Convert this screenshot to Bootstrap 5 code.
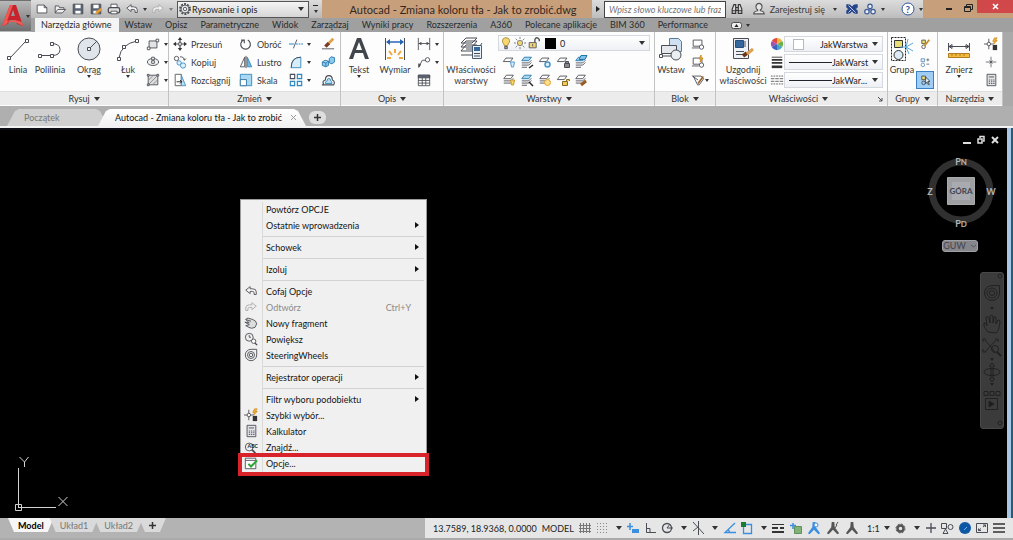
<!DOCTYPE html>
<html lang="pl">
<head>
<meta charset="utf-8">
<meta name="viewport" content="width=device-width, initial-scale=1">
<title>Autocad - Zmiana koloru tła - Jak to zrobić.dwg</title>
<link href="https://cdn.jsdelivr.net/npm/bootstrap@5.3.0/dist/css/bootstrap.min.css" rel="stylesheet">
<script src="https://cdn.jsdelivr.net/npm/bootstrap@5.3.0/dist/js/bootstrap.bundle.min.js"></script>
<style>
body{font-family:Lato,"Noto Sans",sans-serif;font-size:9px;line-height:11px;color:#222;background:#b0b0b0}
svg{display:block;flex:none;fill:none;stroke:#4a4d55;stroke-width:1}
.i14{width:14px;height:14px}.i16{width:16px;height:16px}
.shrinkable{min-width:0;min-height:0}
.btn{font-size:9px;line-height:11px;padding:0;border:0;border-radius:0;color:#3a3a3a;white-space:nowrap}
.caret{width:0;height:0;border:3px solid transparent;border-top:4px solid #333;border-bottom:0;flex:none}
.caret-sm{border-width:2px;border-top-width:3px;border-bottom:0}
/* title bar */
.app-logo{width:31px;height:32px;background:linear-gradient(#b9b9b9,#6f6f6f);border:1px solid #333}
.title-row{height:18px;background:#c79f7b}
.quick{width:291px;background:linear-gradient(#dcdcdc,#b9b9b9)}
.workspace{width:132px;height:17px;border:1px solid #555;background:linear-gradient(#f4f4f4,#d6d6d6)}
.workspace select,.combo select{appearance:none;border:0;background:none;font-size:9px;color:#222;padding:0;outline:0;min-width:0}
.tick{width:5px}
.doc-title{font-size:11px;color:#33281f;padding-left:12px}
.search-part{width:331px;background:linear-gradient(#dcdcdc,#bdbdbd)}
.search-part input{width:133px;height:17px;font-size:9px;font-style:italic;border:1px solid #444;padding:0 4px;border-radius:0}
.win-min{margin-left:22px;margin-right:11px}
.win-close{width:36px;height:13px;background:#d0484a}
/* ribbon tabs */
.ribbon-tabs{height:14px;background:#a0a0a0}
.ribbon-tabs a{color:#2b2b2b;text-decoration:none;line-height:14px;padding:0 7px 0 6px}
.ribbon-tabs a.active{background:#f4f4f4}
/* panels */
.ribbon{height:74px;background:#a9a9a9;padding-right:10px}
.panel{background:#fdfdfd;border-right:1px solid #c2c2c2;flex:1 1 0;min-width:0}
.panel-draw{flex-basis:169px}.panel-modify{flex-basis:172px}.panel-annot{flex-basis:103px}.panel-layers{flex-basis:211px}
.panel-block{flex-basis:61px}.panel-props{flex-basis:172px}.panel-groups{flex-basis:50px}.panel-tools{flex-basis:65px}
.panel-body{height:59px;padding-top:3px}
.panel-foot{height:14px;background:#ececec;border-top:1px solid #dedede;color:#333}
.stack-col>*{height:18px}
.tall{display:flex;flex-direction:column;align-items:center;height:54px}
.tall .pic{height:28px;margin-bottom:1px;display:flex;align-items:center}
.w28{width:28px}.w32{width:32px}.w36{width:36px}.w42{width:42px}.w50{width:50px}.w54{width:54px}.w66{width:66px}
.combo{height:16px;border:1px solid #d5d8de;background:linear-gradient(#fff,#eef0f4)}
.swatch{width:11px;height:11px}
.line-sample{width:43px}
.pressed{background:#9fcdf5!important;box-shadow:inset 0 0 0 1px #3b7fc4}
/* file tabs */
.file-tabs{height:22px;background:#afafaf;border-bottom:2px solid #f2f2f2;padding:3px 0 0 7px}
.file-tab{width:101px;height:17px;background:#d0d0d0;color:#777;clip-path:polygon(0 100%,8px 2px,12px 0,calc(100% - 12px) 0,calc(100% - 8px) 2px,100% 100%);padding:0 17px}
.file-tab.active{width:208px;background:linear-gradient(#fff,#f1f1f1);color:#111;margin-left:-10px}
.add-tab{background:#dedede;width:17px;height:13px;margin:2px 0 0 3px}
/* drawing area */
.canvas{background:#000;border-top:2px solid #0c0e14}
.edge{width:6px;background:linear-gradient(90deg,#a8c6e6 0 4px,#285a70 4px)}
.doc-win{right:7px;top:5px}
.doc-win svg{stroke:#ddd;stroke-width:2}
.compass{right:10px;top:20px}
.compass text{stroke:none;font-weight:700}
.ucs-pill{right:29px;top:110px;width:36px;height:12px;line-height:10px;background:#85858c;border:1px solid #a0a0a8!important;border-radius:3px;color:#44444a}
.nav-strip{right:3px;top:142px;width:24px;background:#3b3b3b;border:1px solid #484848;border-radius:3px}
.nav-strip svg{stroke:#212121}
.nav-strip .caret{border-top-color:#212121}
.axes{left:8px;bottom:1px;stroke:#d2d2d2}
.ctx{display:block;position:absolute;left:240px;top:69px;width:187px;min-width:0;padding:1px 0 3px;font-size:9px;background:#f0f0f0;border:1px solid #9b9b9b;border-radius:0}
.ctx::before{content:"";position:absolute;left:21px;top:2px;bottom:2px;border-left:1px solid #dadada}
.ctx .dropdown-item{display:flex;align-items:center;height:16px;padding:0 7px 0 3px;font-size:9px;line-height:15px;color:#141414}
.ctx .dropdown-item.disabled{color:#8b8b8b}
.ctx .slot{width:14px;margin-right:8px;flex:none}
.ctx .dropdown-divider{margin:3px 2px 2px 22px;border-color:#d2d2d2;opacity:1}
.right-tri{border:3px solid transparent;border-left:4px solid #111;border-right:0;margin-left:auto}
.framed{position:relative}
.framed::after{content:"";position:absolute;left:-3px;right:-3px;top:-2px;bottom:-5px;border:4px solid #d8232a}
/* status bar */
.status{height:22px;background:#b3b3b3;border-bottom:2px solid #aaa}
.sheet{height:14px;background:#dadada;color:#777;clip-path:polygon(0 0,100% 0,calc(100% - 6px) 100%,6px 100%);padding:0 10px;line-height:13px}
.sheet+.sheet{margin-left:-4px}
.sheet.active{background:#f6f6f6;color:#000;font-weight:700}
.tray{width:588px;background:#e6e6e6}
.gray-fill{fill:#555}.blue-fill{fill:#3b8ee0}
</style>
</head>
<body class="vh-100 d-flex flex-column overflow-hidden">
<svg class="d-none">
<defs>
<symbol id="new" viewBox="0 0 16 16"><path fill="#fff" d="M2.500 3.500h8l3 3v6h-11zM10.500 3.500v3h3"/></symbol>
<symbol id="open" viewBox="0 0 16 16"><path fill="#eee" d="M2.500 12.500v-8h4l1 2h5v2M2.500 12.500l3-4h9l-4 4z"/></symbol>
<symbol id="save" viewBox="0 0 16 16"><path fill="#596474" d="M2.500 2.500h11v11h-11z"/><path fill="#fff" stroke="none" d="M5 3h6v4H5zM5 10h6v3H5z"/></symbol>
<symbol id="saveas" viewBox="0 0 16 16"><path fill="#596474" d="M2.500 2.500h11v11h-11z"/><path fill="#fff" stroke="none" d="M5 3h6v4H5zM5 10h4v3H5z"/><path stroke="#e59a32" stroke-width="3" d="M8 13l6-5"/></symbol>
<symbol id="print" viewBox="0 0 16 16"><path fill="#fff" d="M4.500 7v-4.500h7V7"/><rect fill="#ddd" x="1.500" y="6.500" width="13" height="6" rx="2" stroke-width="1.500"/><path fill="#fff" d="M4.500 10.500h7v3h-7z"/></symbol>
<symbol id="undo" viewBox="0 0 16 16"><path fill="#f4f4f4" d="M2 7l5-4v2.500h3q4 0 4 3.500v3h-2.500v-2q0-1.500-2-1.500H7V11z"/></symbol>
<symbol id="redo" viewBox="0 0 16 16"><path fill="#eee" stroke="#aaa" d="M14 7L9 3v2.500H6Q2 5.500 2 9v3h2.500v-2q0-1.500 2-1.500H9V11z"/></symbol>
<symbol id="gear" viewBox="0 0 16 16"><circle cx="8" cy="8" r="5.500" stroke-width="2.500" stroke-dasharray="2.200 1.255"/><circle cx="8" cy="8" r="4.500" fill="#eee"/><circle cx="8" cy="8" r="2"/></symbol>
<symbol id="bino" viewBox="0 0 16 16"><g stroke="#333" stroke-width="1.300" fill="#ddd"><path d="M2.500 13v-5l2-5h2v10zM13.500 13v-5l-2-5h-2v10zM6.500 6.500h3v3h-3z"/><path d="M2.500 10h4M9.500 10h4"/></g></symbol>
<symbol id="user" viewBox="0 0 16 16"><path fill="#e6e6e6" stroke="#555" stroke-width="1.300" d="M2 13.500q0-3 4.500-3.500v-1q-2-1-2-4 .500-3.500 3.500-3.500t3.500 3.500q0 3-2 4v1q4.500 .500 4.500 3.500z"/></symbol>
<symbol id="exch" viewBox="0 0 16 16"><path fill="#24448c" stroke="#24448c" d="M2 3l4 .500L8 6l2-2.500L14 3v3l-2 2 2 2v3l-4-.500L8 10l-2 2.500L2 13v-3l2-2-2-2z"/><path stroke="#dce4f4" d="M4 4l8 8M4 12l3-3"/></symbol>
<symbol id="a360" viewBox="0 0 16 16"><g stroke="#3d5c98" stroke-width="1.400" fill="#e8edf6"><circle cx="8" cy="5" r="2.500"/><circle cx="4.500" cy="11" r="2.500"/><circle cx="11.500" cy="11" r="2.500"/><path d="M8 7v2.500"/></g></symbol>
<symbol id="move" viewBox="0 0 16 16"><path d="M8 3v10M3 8h10" stroke-width="1.400"/><path fill="#333" stroke="none" d="M8 0l2.500 3.500h-5zM8 16l2.500-3.500h-5zM0 8l3.500-2.500v5zM16 8l-3.500-2.500v5z"/><path fill="#fff" d="M6.500 6.500h3v3h-3z"/></symbol>
<symbol id="copy" viewBox="0 0 16 16"><circle cx="4" cy="4" r="2.500"/><path d="M8 2q5 0 5 4M12 4l1 2 2-2"/><g stroke="#3b8fc6" fill="#dff0fa"><circle cx="7" cy="9" r="2.500"/><circle cx="11.500" cy="12" r="3"/></g></symbol>
<symbol id="stretch" viewBox="0 0 16 16"><path fill="#fff" stroke="#555" d="M2.500 1.500h7v13h-7z"/><path fill="#b9ddf2" stroke="#3b8fc6" d="M9.500 2.500l5 12h-5z"/><path stroke="#222" d="M4 10h6M8 8l2 2-2 2"/></symbol>
<symbol id="rotate" viewBox="0 0 16 16"><path stroke-width="1.300" d="M10 3.500A5.500 5.500 0 1 1 5 3.500M2.500 3.500H6V7"/></symbol>
<symbol id="mirror" viewBox="0 0 16 16"><path d="M6.500 2.500v11h-5z"/><path stroke="#2f86bd" fill="#70b7de" d="M9.500 2.500v11h5z"/><path d="M8 1v14" stroke="#333"/></symbol>
<symbol id="scale" viewBox="0 0 16 16"><path fill="#a9d8f2" stroke="#2f86bd" d="M1.500 1.500h13v13h-13z"/><path fill="#fff" stroke="#2f6f99" d="M1.500 7.500h7v7h-7z"/></symbol>
<symbol id="trim" viewBox="0 0 16 16"><path d="M9 3L5 13"/><path stroke="#2f86bd" stroke-width="1.300" d="M0 8h6M8 8h2m1 0h2m1 0h2"/></symbol>
<symbol id="fillet" viewBox="0 0 16 16"><path fill="#d8edfa" stroke="#2f86bd" d="M13.500 2.500v12h-11q0-12 11-12z"/><path d="M2.500 14.500q0-12 11-12"/></symbol>
<symbol id="array" viewBox="0 0 16 16"><g stroke="#2f86bd" fill="#e6f4fc" stroke-width="1.300"><path d="M9.500 1.500h5v5h-5zM1.500 9.500h5v5h-5zM9.500 9.500h5v5h-5z"/></g><path fill="#fff" stroke-width="1.300" d="M1.500 1.500h5v5h-5z"/></symbol>
<symbol id="erase" viewBox="0 0 16 16"><path stroke="#e0a04a" stroke-width="3" d="M14 2L8 8"/><path stroke="#7a3c22" stroke-width="4" d="M9 7l-4 4"/><path d="M1 13.500h14"/></symbol>
<symbol id="explode" viewBox="0 0 16 16"><g fill="#8cc9ea" stroke="#2376ac"><path d="M1.500 8l3-2 4 1v5l-3 1.500-4-1.500zM9.500 4l2-2 4 1v5l-3 2-3-1zM1.500 8l4 1 3-2M5.500 9v4"/></g></symbol>
<symbol id="offset" viewBox="0 0 16 16"><path stroke-width="1.300" d="M1 13.500h14M3 13q-2-4 2-5 0-5 4-5t4 5q3 1 2 5"/><path fill="#b4dcf3" stroke="#2f86bd" d="M5 12q-1-2 2-3 0-3 2-3t2 3q2 1 1.500 3z"/></symbol>
<symbol id="rect" viewBox="0 0 16 16"><path fill="#e2e2e2" d="M3.500 4.500h9v8h-9z"/><path fill="#fff" d="M11.500 2.500h3v3h-3zM1.500 11.500h3v3h-3z"/></symbol>
<symbol id="ellipse" viewBox="0 0 16 16"><ellipse cx="8" cy="8" rx="6.500" ry="4" fill="#eee"/><path fill="#fff" d="M6.500 6.500h3v3h-3zM6.500 2.500h3v3h-3z"/></symbol>
<symbol id="hatch" viewBox="0 0 16 16"><path fill="#ddd" d="M2.500 2.500h11v11h-11z"/><path stroke="#888" d="M3 8l5-5M3 13L13 3M8 13l5-5"/><path fill="#fff" d="M1.500 1.500h2v2h-2zM12.500 1.500h2v2h-2zM1.500 12.500h2v2h-2z"/></symbol>
<symbol id="dimlin" viewBox="0 0 16 16"><path d="M1.500 1v14M14.500 1v14M2 7.500h12"/><path fill="#444" stroke="none" d="M2 7.500l3-2v4zM14 7.500l-3-2v4z"/></symbol>
<symbol id="leader" viewBox="0 0 16 16"><path d="M2 14l4-8h4"/><circle cx="12" cy="5.500" r="2.500"/><path fill="#444" d="M2 14v-4l2 1z"/></symbol>
<symbol id="table" viewBox="0 0 16 16"><path fill="#fff" d="M1.500 2.500h13v12h-13zM1.500 8.500h13M1.500 11.500h13M6 5v9M10 5v9"/><path fill="#596474" d="M1.500 2.500h13v3h-13z"/></symbol>
<symbol id="layer" viewBox="0 0 16 16"><path fill="#fff" d="M5 2.500h8l-3 4H2zM2 9h8l3-3M2 11.500h8l3-3"/></symbol>
<symbol id="flat" viewBox="0 0 16 16"><path fill="#fff" d="M4.500 3.500h8l-3 4h-8z"/></symbol>
<symbol id="bluelayer" viewBox="0 0 16 16"><path fill="#a9d8f2" stroke="#2376ac" d="M5 2.500h8l-3 4H2z"/><path d="M2 9h8l3-3M2 11.500h8l3-3M2 14h6"/></symbol>
<symbol id="bulb" viewBox="0 0 16 16"><path fill="#f6d871" stroke="#a48435" d="M6 11q0-2-2-4-.500-5 4-5t4 5q-2 2-2 4z"/><path fill="#aaa" d="M6.500 12h3v2.500h-3z"/></symbol>
<symbol id="sun" viewBox="0 0 16 16"><circle cx="8" cy="8" r="3" fill="#f4d471" stroke="#777"/><path stroke="#777" d="M8 1v2.500M8 12.500V15M1 8h2.500M12.500 8H15M3 3l2 2M11 11l2 2M13 3l-2 2M5 11l-2 2"/></symbol>
<symbol id="unlock" viewBox="0 0 16 16"><path stroke-width="1.500" d="M9 7V4q2-4 5 0v2"/><path fill="#f0d37b" stroke="#555" d="M2.500 7.500h8v6h-8zM6.500 9v3"/></symbol>
<symbol id="insblk" viewBox="0 0 16 16"><path fill="#fff" d="M2.500 3.500h10v7h-10zM1 12.500h8"/><circle cx="12" cy="11.500" r="2.500" fill="#fff"/></symbol>
<symbol id="attr" viewBox="0 0 16 16"><path fill="#fff" d="M2.500 3.500h9l3 3-5 7h-2z"/><path stroke="#9a642b" stroke-width="2" d="M8 12l6-8"/><path d="M1 3l7 5"/></symbol>
<symbol id="group" viewBox="0 0 16 16"><path fill="#ecdf78" stroke="#333" d="M2.500 2.500h5v5h-5z"/><circle cx="5" cy="12" r="2.500" stroke="#333"/></symbol>
<symbol id="qsel" viewBox="0 0 16 16"><path d="M5.500 2v12M0 8h11"/><circle cx="5.500" cy="8" r="2" fill="#fff"/><path fill="#eeb23b" stroke="#d59122" d="M12 1l-2 4h2l-1 3 4-4h-2l2-3z"/><path fill="#333" stroke="none" d="M10 9h5v6h-5z"/></symbol>
<symbol id="point" viewBox="0 0 16 16"><path d="M8 1v14M1 8h14"/><path fill="#555" d="M6 6l4 4M10 6l-4 4"/></symbol>
<symbol id="calc" viewBox="0 0 16 16"><path fill="#e2e4e8" d="M3.500 1.500h10v13h-10z"/><path d="M5.500 4.500h6M5.500 8h1.500M8 8h1.500M10.500 8H12M5.500 10h1.500M8 10h1.500M10.500 10H12M5.500 12h1.500M8 12h1.500M10.500 12H12"/></symbol>
<symbol id="wheel" viewBox="0 0 16 16"><path d="M8 1.500h6.500V8A6.500 6.500 0 1 1 8 1.500z"/><circle cx="8" cy="8" r="4"/><circle cx="8" cy="8" r="2"/></symbol>
<symbol id="pan" viewBox="0 0 16 16"><path fill="#ddd" d="M2 4q1-2 3-1.500L10 4q4 1 4.500 5l-2 4q-4 2-7 0L2 11l4-1-5-3 5 1-4-4 6 2"/></symbol>
<symbol id="zoom" viewBox="0 0 16 16"><circle cx="6" cy="6" r="4.500" fill="#eee"/><path d="M6 3.500V6h2"/><circle cx="11" cy="10.500" r="2.500" fill="#fff"/><path stroke-width="1.600" d="M12.500 12.500L15 15"/></symbol>
<symbol id="find" viewBox="0 0 16 16"><circle cx="6" cy="8" r="4.500"/><path stroke-width="2" d="M9 11l4 4"/><text x="4" y="9" font-size="6" font-weight="700" fill="#222" stroke="none">ABC</text></symbol>
<symbol id="opts" viewBox="0 0 16 16"><path fill="#fff" d="M1.500 2.500h12v12h-12zM1.500 5h12"/><path stroke="#31a436" stroke-width="2.400" d="M5 9l3 3 7-7"/></symbol>
<symbol id="man" viewBox="0 0 16 16"><path stroke="none" d="M6.500 1h3l.500 6 5 7-2 1-5-5-5 5-2-1 5-7z"/></symbol>
<symbol id="lineweight" viewBox="0 0 16 16"><path stroke="#333" d="M2 2.500h12"/><path stroke="#333" stroke-width="2" d="M2 5.500h12M2 9h12"/><path stroke="#333" stroke-width="3" d="M2 13.500h12"/></symbol>
<symbol id="linetype" viewBox="0 0 16 16"><path stroke="#555" d="M1 3.500h14M1 12.500h14" stroke-dasharray="2 1"/><path stroke="#555" d="M1 6.500h14M1 9.500h14" stroke-dasharray="4 1"/></symbol>
</defs>
</svg>

<header class="d-flex flex-shrink-0">
  <button class="btn app-logo d-flex align-items-center justify-content-between flex-shrink-0" aria-label="Menu aplikacji">
    <svg width="23" height="24" viewBox="0 0 23 24"><path stroke="none" fill="#c8232c" d="M1 22L9 1h6l7 21-6-2-1-4H9l-2 4zM10 12h4l-2-6z"/><path stroke="none" fill="#ee5a52" d="M1 22L9 1h3L6 17l2-1-2 4zM8 17q6-2 13 1l1 4-6-3q-5-2-9 0z"/></svg>
    <span class="caret caret-sm"></span>
  </button>
  <div class="flex-grow-1 d-flex flex-column shrinkable">
    <div class="title-row d-flex">
      <div class="quick d-flex align-items-center">
        <div class="d-flex align-items-center ps-1 flex-grow-1">
          <button class="btn me-1" aria-label="Nowy"><svg class="i14"><use href="#new"/></svg></button>
          <button class="btn me-1" aria-label="Otwórz"><svg class="i14"><use href="#open"/></svg></button>
          <button class="btn me-1" aria-label="Zapisz"><svg class="i14"><use href="#save"/></svg></button>
          <button class="btn me-1" aria-label="Zapisz jako"><svg class="i14"><use href="#saveas"/></svg></button>
          <button class="btn me-1" aria-label="Drukuj"><svg class="i14"><use href="#print"/></svg></button>
          <button class="btn d-flex align-items-center gap-1" aria-label="Cofaj"><svg class="i14"><use href="#undo"/></svg><span class="caret caret-sm"></span></button>
          <button class="btn d-flex align-items-center gap-1 ms-1" aria-label="Odtwórz"><svg class="i14"><use href="#redo"/></svg><span class="caret caret-sm opacity-50"></span></button>
        </div>
        <div class="workspace d-flex align-items-center pe-1">
          <svg class="i14"><use href="#gear"/></svg>
          <select class="flex-grow-1" aria-label="Obszar roboczy"><option>Rysowanie i opis</option></select>
          <span class="caret"></span>
        </div>
        <button class="btn px-1 d-flex flex-column align-items-center" aria-label="Dostosuj"><span class="tick border-top border-dark mb-1"></span><span class="caret caret-sm"></span></button>
      </div>
      <div class="doc-title flex-grow-1 d-flex align-items-center justify-content-center text-nowrap">Autocad - Zmiana koloru tła - Jak to zrobić.dwg</div>
      <div class="search-part d-flex align-items-center">
        <button class="btn px-1" aria-label="Rozwiń"><svg width="4" height="8"><path fill="#222" stroke="none" d="M0 1l4 3-4 3z"/></svg></button>
        <input type="text" placeholder="Wpisz słowo kluczowe lub frazę" aria-label="Szukaj">
        <button class="btn ms-1" aria-label="Wyszukaj"><svg class="i14"><use href="#bino"/></svg></button>
        <button class="btn d-flex align-items-center ms-2"><svg class="i14 me-1"><use href="#user"/></svg>Zarejestruj się<span class="caret caret-sm ms-2"></span></button>
        <button class="btn ms-2" aria-label="Exchange"><svg class="i14"><use href="#exch"/></svg></button>
        <button class="btn d-flex align-items-center ms-1" aria-label="A360"><svg class="i14"><use href="#a360"/></svg><span class="caret caret-sm ms-1"></span></button>
        <button class="btn d-flex align-items-center ms-3" aria-label="Pomoc"><svg class="i14" viewBox="0 0 14 14"><circle cx="7" cy="7" r="6" fill="#fff" stroke="#2f56a0"/><text x="4.500" y="10.500" font-size="10" font-weight="700" fill="#2f56a0" stroke="none">?</text></svg><span class="caret caret-sm ms-1"></span></button>
      </div>
      <div class="d-flex align-items-start">
        <button class="btn win-min py-1" aria-label="Minimalizuj"><svg width="8" height="8"><path stroke="#222" stroke-width="2" d="M1 5h6"/></svg></button>
        <button class="btn pe-1 py-1" aria-label="Przywróć"><svg width="9" height="8"><path stroke="#222" d="M.5 2.500h6v5h-6zM2.500 2V.5h6v5H7M0 3.500h6"/></svg></button>
        <button class="btn win-close d-flex align-items-center justify-content-center" aria-label="Zamknij"><svg width="7" height="7"><path stroke="#fff" stroke-width="1.500" d="M1 1l5 5M6 1L1 6"/></svg></button>
      </div>
    </div>
    <nav class="ribbon-tabs d-flex text-nowrap" aria-label="Wstążka">
      <a href="#" class="active ms-1">Narzędzia główne</a><a href="#">Wstaw</a><a href="#">Opisz</a><a href="#">Parametryczne</a><a href="#">Widok</a><a href="#">Zarządzaj</a><a href="#">Wyniki pracy</a><a href="#">Rozszerzenia</a><a href="#">A360</a><a href="#">Polecane aplikacje</a><a href="#">BIM 360</a><a href="#">Performance</a>
      <button class="btn d-flex align-items-center ms-3" aria-label="Zwiń"><svg width="11" height="7"><rect x=".5" y=".5" width="10" height="6" rx="2" fill="#eee"/><path fill="#222" stroke="none" d="M3.500 5l2-3 2 3z"/></svg><span class="caret caret-sm ms-1"></span></button>
    </nav>
  </div>
</header>

<main class="ribbon d-flex flex-shrink-0">
  <section class="panel panel-draw">
    <div class="panel-body d-flex">
      <button class="btn tall w36"><span class="pic"><svg width="24" height="25"><path d="M4 21L20 4"/><path fill="#fff" d="M1.500 19.500h3v3h-3zM19.500 2.500h3v3h-3z"/></svg></span>Linia</button>
      <button class="btn tall w28"><span class="pic"><svg width="24" height="24"><path d="M2 18.500h12q8 0 8-6t-9-6"/><path fill="#fff" d="M.5 17.500h3v3h-3zM12.500 17.500h3v3h-3zM12.500 5.500h3v3h-3z"/></svg></span>Polilinia</button>
      <button class="btn tall w42 ms-1 me-n1"><span class="pic"><svg width="24" height="26"><circle cx="12" cy="13" r="11" fill="#dfe5ea"/><path d="M12 13l8-8"/><path fill="#fff" d="M10.500 11.500h3v3h-3z"/></svg></span>Okrąg<span class="caret caret-sm"></span></button>
      <button class="btn tall w36"><span class="pic"><svg width="24" height="25"><path d="M3 21Q5 7 21 4"/><path fill="#fff" d="M1.500 20.500h3v3h-3zM19.500 2.500h3v3h-3zM6.500 8.500h3v3h-3z"/></svg></span>Łuk<span class="caret caret-sm"></span></button>
      <div class="stack-col">
        <button class="btn d-flex align-items-center gap-1" aria-label="Prostokąt"><svg class="i14"><use href="#rect"/></svg><span class="caret caret-sm"></span></button>
        <button class="btn d-flex align-items-center gap-1" aria-label="Elipsa"><svg class="i14"><use href="#ellipse"/></svg><span class="caret caret-sm"></span></button>
        <button class="btn d-flex align-items-center gap-1" aria-label="Kreskuj"><svg class="i14"><use href="#hatch"/></svg><span class="caret caret-sm"></span></button>
      </div>
    </div>
    <div class="panel-foot d-flex align-items-center justify-content-center gap-1">Rysuj<span class="caret"></span></div>
  </section>
  <section class="panel panel-modify">
    <div class="panel-body d-flex ps-1">
      <div class="stack-col w66">
        <button class="btn d-flex align-items-center gap-1"><svg class="i14"><use href="#move"/></svg>Przesuń</button>
        <button class="btn d-flex align-items-center gap-1"><svg class="i14"><use href="#copy"/></svg>Kopiuj</button>
        <button class="btn d-flex align-items-center gap-1"><svg class="i14"><use href="#stretch"/></svg>Rozciągnij</button>
      </div>
      <div class="stack-col w50">
        <button class="btn d-flex align-items-center gap-1"><svg class="i14"><use href="#rotate"/></svg>Obróć</button>
        <button class="btn d-flex align-items-center gap-1"><svg class="i14"><use href="#mirror"/></svg>Lustro</button>
        <button class="btn d-flex align-items-center gap-1"><svg class="i14"><use href="#scale"/></svg>Skala</button>
      </div>
      <div class="stack-col w32">
        <button class="btn d-flex align-items-center gap-1" aria-label="Utnij"><svg class="i14"><use href="#trim"/></svg><span class="caret caret-sm"></span></button>
        <button class="btn d-flex align-items-center gap-1" aria-label="Zaokrągl"><svg class="i14"><use href="#fillet"/></svg><span class="caret caret-sm"></span></button>
        <button class="btn d-flex align-items-center gap-1" aria-label="Szyk"><svg class="i14"><use href="#array"/></svg><span class="caret caret-sm"></span></button>
      </div>
      <div class="stack-col">
        <button class="btn d-flex align-items-center" aria-label="Wymaż"><svg class="i14"><use href="#erase"/></svg></button>
        <button class="btn d-flex align-items-center" aria-label="Rozbij"><svg class="i14"><use href="#explode"/></svg></button>
        <button class="btn d-flex align-items-center" aria-label="Odsuń"><svg class="i14"><use href="#offset"/></svg></button>
      </div>
    </div>
    <div class="panel-foot d-flex align-items-center justify-content-center gap-1">Zmień<span class="caret"></span></div>
  </section>
  <section class="panel panel-annot">
    <div class="panel-body d-flex">
      <button class="btn tall w36"><span class="pic"><svg width="22" height="26"><path stroke="none" fill="#41454c" d="M1 23L9 2h4l8 21h-4l-2-6H7l-2 6zM8 14h6l-3-8z"/></svg></span>Tekst<span class="caret caret-sm"></span></button>
      <button class="btn tall w36"><span class="pic"><svg width="22" height="26"><path d="M1.500 2v22M20.500 2v22"/><path stroke="#2864b4" stroke-width="1.500" d="M3 6h16"/><path fill="#2864b4" stroke="none" d="M2 6l4-3v6zM20 6l-4-3v6z"/><g stroke="#eda83c" stroke-width="2"><path d="M11 13v4M5 15l3 4M17 15l-3 4M3 22h4M15 22h4"/></g></svg></span>Wymiar</button>
      <div class="stack-col ps-1">
        <button class="btn d-flex align-items-center gap-1" aria-label="Liniowy"><svg class="i14"><use href="#dimlin"/></svg><span class="caret caret-sm"></span></button>
        <button class="btn d-flex align-items-center gap-1" aria-label="Odniesienie"><svg class="i14"><use href="#leader"/></svg><span class="caret caret-sm"></span></button>
        <button class="btn d-flex align-items-center" aria-label="Tabela"><svg class="i14"><use href="#table"/></svg></button>
      </div>
    </div>
    <div class="panel-foot d-flex align-items-center justify-content-center gap-1">Opis<span class="caret"></span></div>
  </section>
  <section class="panel panel-layers">
    <div class="panel-body d-flex">
      <button class="btn tall w54"><span class="pic"><svg width="26" height="26"><g fill="#fff"><path d="M8 13h12l4-6M3 19h12M8 9h11l-5 6H3zM8 5h11l-5 6H3zM8 2h11l-5 5H3z"/></g><path fill="#eaf2fa" stroke="#4a5a70" d="M14.500 9.500h9v13h-9z"/><path fill="#35679f" stroke="none" d="M16 11h6v4h-6z"/><path d="M16 17.500h6M16 20h6"/></svg></span>Właściwości<br>warstwy</button>
      <div class="flex-grow-1 pe-1">
        <div class="combo d-flex align-items-center mb-1">
          <svg class="i14"><use href="#bulb"/></svg><svg class="i14"><use href="#sun"/></svg><svg class="i14"><use href="#unlock"/></svg><span class="swatch bg-black ms-1 me-1"></span>
          <select class="flex-grow-1" aria-label="Warstwa"><option>0</option></select><span class="caret me-1"></span>
        </div>
        <div class="d-flex gap-1 mb-1 px-1">
          <svg class="i14"><use href="#flat"/><path stroke="#5a9cce" fill="#d4ecfa" d="M8.500 7h4l-1 5h-2z"/></svg>
          <svg class="i14"><use href="#bluelayer"/><path stroke="#222" stroke-width="1.500" d="M9 13l4-3"/></svg>
          <svg class="i14"><use href="#flat"/><circle cx="9.500" cy="9.500" r="2.500" fill="#dff2fc" stroke="#4b94c4" stroke-width="1.500"/></svg>
          <svg class="i14"><use href="#flat"/><path fill="#888" d="M8.500 8.500h5v4h-5zM9.500 8V6.500h3V8"/></svg>
          <svg class="i14"><use href="#bluelayer"/><path fill="#7fc1e6" stroke="#2376ac" d="M7 .5h6l-2 4H5z"/></svg>
        </div>
        <div class="d-flex gap-1 px-1">
          <svg class="i14"><use href="#layer"/><path stroke="#c89230" fill="#f8d86a" d="M8.500 7h4l-1 5h-2z"/></svg>
          <svg class="i14"><use href="#bluelayer"/><path stroke="#222" stroke-width="1.500" d="M9 9l4 4"/></svg>
          <svg class="i14"><use href="#layer"/><circle cx="9.500" cy="9.500" r="3" fill="#fae08a" stroke="#e0a232"/></svg>
          <svg class="i14"><use href="#flat"/><path fill="#f0c95a" stroke="#8a6a22" d="M6.500 8.500h5v4h-5zM10.500 8V6.500h3V8"/></svg>
          <svg class="i14"><use href="#layer"/><path stroke="#9a5b25" stroke-width="3" d="M7 12l5-4"/></svg>
        </div>
      </div>
    </div>
    <div class="panel-foot d-flex align-items-center justify-content-center gap-1">Warstwy<span class="caret"></span></div>
  </section>
  <section class="panel panel-block">
    <div class="panel-body d-flex">
      <button class="btn tall w32"><span class="pic"><svg width="25" height="26"><path fill="#cfe0f0" stroke="#5a7ca4" d="M10.500 2.500h9l3 3v10h-12z"/><path fill="#e4e8ec" d="M2.500 9.500h15v8h-15z"/><circle cx="17" cy="19" r="5" fill="#eceff2"/><path fill="#fff" d="M.5 18.500h3v3h-3zM3 20h9"/></svg></span>Wstaw</button>
      <div class="stack-col">
        <button class="btn d-flex align-items-center ms-1" aria-label="Utwórz"><svg class="i14"><use href="#insblk"/></svg></button>
        <button class="btn d-flex align-items-center ms-1" aria-label="Edytuj"><svg class="i14"><use href="#insblk"/><path fill="#f2b53c" stroke="#d08c20" d="M10 0L8 4h2l-1 3 3-4h-2z"/></svg></button>
        <button class="btn d-flex align-items-center ms-1" aria-label="Atrybuty"><svg class="i14"><use href="#attr"/></svg><span class="caret caret-sm"></span></button>
      </div>
    </div>
    <div class="panel-foot d-flex align-items-center justify-content-center gap-1">Blok<span class="caret"></span></div>
  </section>
  <section class="panel panel-props">
    <div class="panel-body d-flex">
      <button class="btn tall w54"><span class="pic"><svg width="24" height="26"><path fill="#eef2f6" d="M2.500 2.500h15v20h-15z"/><path fill="#35679f" stroke="#24507e" d="M4.500 4.500h8v7h-8z"/><path d="M5 15.500h8M5 18.500h8M14 5v6"/><path stroke="#6c3515" stroke-width="4" d="M12 20l4-3"/><path stroke="#e0a053" stroke-width="3" d="M16 18l6-5"/></svg></span>Uzgodnij<br>właściwości</button>
      <div class="stack-col flex-grow-1 shrinkable pe-1">
        <div class="d-flex align-items-center"><svg class="i14" viewBox="0 0 16 16"><g stroke="none"><path fill="#e24a3c" d="M8 8V1a7 7 0 0 0-6 3.500z"/><path fill="#a54fae" d="M8 8L2 4.500a7 7 0 0 0 0 7z"/><path fill="#3b62bd" d="M8 8l-6 3.500A7 7 0 0 0 8 15z"/><path fill="#45a7c4" d="M8 8v7a7 7 0 0 0 6-3.500z"/><path fill="#69b14b" d="M8 8l6 3.500a7 7 0 0 0 0-7z"/><path fill="#f0b33d" d="M8 8l6-3.500A7 7 0 0 0 8 1z"/></g></svg>
          <div class="combo flex-grow-1 shrinkable d-flex align-items-center"><span class="swatch bg-white border border-secondary border-opacity-50 ms-2 me-3"></span><select class="flex-grow-1" aria-label="Kolor"><option>JakWarstwa</option></select><span class="caret me-1"></span></div></div>
        <div class="d-flex align-items-center"><svg class="i14"><use href="#lineweight"/></svg>
          <div class="combo flex-grow-1 shrinkable d-flex align-items-center"><span class="line-sample border-top border-dark ms-1"></span><select class="flex-grow-1" aria-label="Grubość linii"><option>JakWarst</option></select><span class="caret me-1"></span></div></div>
        <div class="d-flex align-items-center"><svg class="i14"><use href="#linetype"/></svg>
          <div class="combo flex-grow-1 shrinkable d-flex align-items-center"><span class="line-sample border-top border-dark ms-1"></span><select class="flex-grow-1" aria-label="Rodzaj linii"><option>JakWar...</option></select><span class="caret me-1"></span></div></div>
      </div>
    </div>
    <div class="panel-foot d-flex align-items-center px-1"><span class="flex-grow-1 d-flex align-items-center justify-content-center gap-1">Właściwości<span class="caret"></span></span><svg width="6" height="6"><path d="M1 1l4 4M5 2v3H2"/></svg></div>
  </section>
  <section class="panel panel-groups">
    <div class="panel-body d-flex">
      <button class="btn tall w28"><span class="pic"><svg width="24" height="28"><path stroke="#222" stroke-dasharray="2 1" d="M1.500 2.500h14v23h-14z"/><path fill="#e8de76" stroke="#333" d="M4.500 5.500h8v7h-8z"/><circle cx="8.500" cy="20" r="4.500" fill="#dcebf6" stroke="#333"/><path stroke="#5aa9dc" d="M16 12l7-4M16 12l7 4M16 12l2-8M16 12l3 7M16 12h-6"/></svg></span>Grupa</button>
      <div class="stack-col">
        <button class="btn d-flex align-items-center px-1" aria-label="Edytuj grupę"><svg width="10" height="14" viewBox="0 0 14 16"><use href="#group" width="16" height="16"/><path stroke="#c88d2b" stroke-width="2.500" d="M6 11l7-9"/></svg></button>
        <button class="btn d-flex align-items-center px-1" aria-label="Rozgrupuj"><svg width="10" height="14" viewBox="0 0 14 16"><path stroke="#4a7eac" fill="#e6f1fa" d="M1.500 3.500h5v4h-5z"/><circle cx="4" cy="12" r="2.500" stroke="#4a7eac"/><path d="M9 5h4M11 3v4M9 11h4"/></svg></button>
        <button class="btn pressed d-flex align-items-center px-1" aria-label="Wybór grupy"><svg width="10" height="14" viewBox="0 0 14 16"><use href="#group" width="16" height="16"/><path fill="#fff" stroke="#222" d="M8 4v9l2-2 2 4 1-1-2-4h3z"/></svg></button>
      </div>
    </div>
    <div class="panel-foot d-flex align-items-center justify-content-center gap-1">Grupy<span class="caret"></span></div>
  </section>
  <section class="panel panel-tools">
    <div class="panel-body d-flex">
      <button class="btn tall w42 me-1"><span class="pic"><svg width="24" height="26"><path d="M1.500 7v8M22.500 7v8M2 10.500h20M2 10.500l3-2v4zM22 10.500l-3-2v4z"/><path fill="#f2bb3e" stroke="#b17c22" d="M1.500 17.500h21v4h-21zM5 18v2M9 18v2M13 18v2M17 18v2"/></svg></span>Zmierz<span class="caret caret-sm"></span></button>
      <div class="stack-col">
        <button class="btn d-flex align-items-center" aria-label="Szybki wybór"><svg class="i14"><use href="#qsel"/></svg></button>
        <button class="btn d-flex align-items-center" aria-label="Punkt"><svg width="14" height="12"><use href="#point"/></svg></button>
        <button class="btn d-flex align-items-center" aria-label="Kalkulator"><svg class="i14"><use href="#calc"/></svg></button>
      </div>
    </div>
    <div class="panel-foot d-flex align-items-center justify-content-center gap-1">Narzędzia<span class="caret"></span></div>
  </section>
</main>

<nav class="file-tabs d-flex flex-shrink-0 text-nowrap" aria-label="Pliki">
  <div class="file-tab d-flex align-items-center">Początek</div>
  <div class="file-tab active d-flex align-items-center">Autocad - Zmiana koloru tła - Jak to zrobić<button class="btn ms-2" aria-label="Zamknij kartę"><svg width="7" height="7"><path stroke="#999" d="M1 1l5 5M6 1L1 6"/></svg></button></div>
  <button class="btn add-tab rounded-2 d-flex align-items-center justify-content-center" aria-label="Nowa karta"><svg width="9" height="9"><path stroke="#333" stroke-width="1.500" d="M1 4.500h7M4.500 1v7"/></svg></button>
</nav>

<div class="d-flex flex-grow-1 shrinkable">
  <div class="canvas position-relative flex-grow-1">
    <div class="doc-win position-absolute d-flex gap-1">
      <svg width="10" height="10"><path d="M1 8h8"/></svg>
      <svg width="10" height="10"><path stroke-width="1.500" d="M2 4h4v4H2zM4 3V1.500h4V6H7"/></svg>
      <svg width="10" height="10"><path d="M2 2l6 6M8 2L2 8"/></svg>
    </div>
    <svg class="compass position-absolute" width="72" height="86" viewBox="0 0 72 86" font-size="9">
      <circle cx="36" cy="41" r="29" stroke="#303030" stroke-width="7"/>
      <path stroke="#aaa" fill="#9d9fa2" d="M22.500 27.500h27v27h-27z"/><path stroke="none" fill="#a9abb0" d="M27 32h18v18H27z"/>
      <text x="36" y="44" text-anchor="middle" font-size="8" fill="#3d4350">GÓRA</text>
      <g fill="#b5b5b5" text-anchor="middle"><text x="36" y="15">P<tspan font-size="8">N</tspan></text><text x="36" y="77">P<tspan font-size="8">D</tspan></text><text x="5" y="45">Z</text><text x="66" y="45">W</text></g>
    </svg>
    <button class="btn ucs-pill position-absolute d-flex align-items-center justify-content-center gap-1">GUW<svg width="7" height="4"><path stroke="#55555c" d="M1 1l2.500 2L6 1"/></svg></button>
    <div class="nav-strip position-absolute d-flex flex-column align-items-center" role="toolbar">
      <svg class="ms-auto" width="6" height="6"><circle cx="3" cy="3" r="2"/></svg>
      <svg width="18" height="28" viewBox="0 0 18 28"><path d="M9 6.500h7.500V14A7.500 7.500 0 1 1 9 6.500z"/><circle cx="9" cy="14" r="5"/><circle cx="9" cy="14" r="2.500"/></svg>
      <span class="caret caret-sm"></span>
      <svg width="18" height="26" viewBox="0 0 18 26"><path d="M5 22Q0 16 1 13q2-1 3 3L3 7q2-1 3 1l1 5V6q2-2 3 0v7l1-6q2-1 2 1v6l2-4q2 0 2 2-1 9-4 11z"/></svg>
      <svg width="20" height="22" viewBox="0 0 20 22"><path d="M3 4l10 12M14 4L3 16M1 6V3h3M13 3h3v3M1 13v3h3"/><circle cx="13" cy="13" r="3.500"/><path stroke-width="2" d="M15 16l4 4"/></svg>
      <span class="caret caret-sm"></span>
      <svg width="18" height="22" viewBox="0 0 18 22"><ellipse cx="9" cy="11" rx="8" ry="3.500"/><path d="M6.500 5l2.500-3 2.500 3H10v13h1.500L9 21l-2.500-3H8V5z"/></svg>
      <span class="caret caret-sm mb-1"></span>
      <svg width="18" height="22" viewBox="0 0 18 22"><path d="M1 1.500h4v4H1zM7 1.500h4v4H7zM13 1.500h4v4h-4zM2.500 8.500h12v11h-12z"/><path fill="#1c1c1c" d="M6 11v6l5-3z"/></svg>
      <svg class="ms-auto mt-2" width="6" height="8"><circle cx="3" cy="3" r="2"/></svg>
    </div>
    <svg class="axes position-absolute" width="64" height="62" viewBox="0 0 64 62"><path d="M10.500 52V13M10 52.500h38M7.500 49.500h6v6h-6z"/><path d="M11.500 2l5 5 4-5M16.500 7v5M50.500 42l9 9M59.500 42l-9 9"/></svg>
    <ul class="dropdown-menu show ctx">
      <li><a class="dropdown-item" href="#"><span class="slot"></span>Powtórz OPCJE</a></li>
      <li><a class="dropdown-item" href="#"><span class="slot"></span>Ostatnie wprowadzenia<span class="right-tri"></span></a></li>
      <li><hr class="dropdown-divider"></li>
      <li><a class="dropdown-item" href="#"><span class="slot"></span>Schowek<span class="right-tri"></span></a></li>
      <li><hr class="dropdown-divider"></li>
      <li><a class="dropdown-item" href="#"><span class="slot"></span>Izoluj<span class="right-tri"></span></a></li>
      <li><hr class="dropdown-divider"></li>
      <li><a class="dropdown-item" href="#"><svg class="i14 slot"><use href="#undo"/></svg>Cofaj Opcje</a></li>
      <li><a class="dropdown-item disabled" href="#"><svg class="i14 slot"><use href="#redo"/></svg>Odtwórz<span class="ms-auto pe-2">Ctrl+Y</span></a></li>
      <li><a class="dropdown-item" href="#"><svg class="i14 slot"><use href="#pan"/></svg>Nowy fragment</a></li>
      <li><a class="dropdown-item" href="#"><svg class="i14 slot"><use href="#zoom"/></svg>Powiększ</a></li>
      <li><a class="dropdown-item" href="#"><svg class="i14 slot"><use href="#wheel"/></svg>SteeringWheels</a></li>
      <li><hr class="dropdown-divider"></li>
      <li><a class="dropdown-item" href="#"><span class="slot"></span>Rejestrator operacji<span class="right-tri"></span></a></li>
      <li><hr class="dropdown-divider"></li>
      <li><a class="dropdown-item" href="#"><span class="slot"></span>Filtr wyboru podobiektu<span class="right-tri"></span></a></li>
      <li><a class="dropdown-item" href="#"><svg class="i14 slot"><use href="#qsel"/></svg>Szybki wybór...</a></li>
      <li><a class="dropdown-item" href="#"><svg class="i14 slot"><use href="#calc"/></svg>Kalkulator</a></li>
      <li><a class="dropdown-item" href="#"><svg class="i14 slot"><use href="#find"/></svg>Znajdź...</a></li>
      <li class="framed"><a class="dropdown-item" href="#"><svg class="i14 slot"><use href="#opts"/></svg>Opcje...</a></li>
    </ul>
  </div>
  <div class="edge flex-shrink-0"></div>
</div>

<footer class="status d-flex flex-shrink-0 text-nowrap">
  <nav class="d-flex flex-grow-1 ps-2" aria-label="Układy">
    <button class="btn sheet active">Model</button><button class="btn sheet">Układ1</button><button class="btn sheet">Układ2</button><button class="btn sheet" aria-label="Nowy układ"><svg width="7" height="7"><path stroke="#333" stroke-width="1.500" d="M0 3.500h7M3.500 0v7"/></svg></button>
  </nav>
  <div class="tray d-flex align-items-center justify-content-between px-2">
    <span>13.7589, 18.9368, 0.0000</span>
    <button class="btn text-dark">MODEL</button>
    <button class="btn" aria-label="Siatka"><svg width="12" height="12"><path stroke="#777" d="M1.500 1v10M4.500 1v10M7.500 1v10M10.500 1v10M0 3.500h12M0 6.500h12M0 9.500h12"/></svg></button>
    <button class="btn d-flex align-items-center gap-2" aria-label="Skok"><svg width="12" height="12"><path stroke="#888" stroke-dasharray="1 2" d="M1 1.500h10M1 4.500h10M1 7.500h10M1 10.500h10"/></svg><span class="caret"></span></button>
    <button class="btn" aria-label="Dynamiczne dane"><svg width="13" height="12"><path stroke="#3b8ee0" stroke-width="1.500" d="M1 4.500h6M4 1v7"/><path fill="#3b8ee0" stroke="none" d="M6 7h7v4H6z"/></svg></button>
    <button class="btn" aria-label="Orto"><svg width="12" height="12"><path d="M2.500 1v9.500H12M2 6.500h4v4"/></svg></button>
    <button class="btn d-flex align-items-center gap-2" aria-label="Biegun"><svg width="12" height="12"><circle cx="6" cy="6" r="4.500" stroke-width="1.300"/><path d="M6 6h6M6 6l3-4"/></svg><span class="caret"></span></button>
    <button class="btn d-flex align-items-center gap-2" aria-label="Izometria"><svg width="12" height="14"><path d="M1 1l11 12M6.500 0v14M1 10l5-4"/></svg><span class="caret"></span></button>
    <button class="btn" aria-label="Śledzenie"><svg width="13" height="12"><path stroke="#3b8ee0" stroke-width="1.300" d="M12 1L2 10.500h11M5 7l2 4"/></svg></button>
    <button class="btn d-flex align-items-center gap-2" aria-label="Przyciąganie"><svg width="12" height="13"><path stroke="#3b8ee0" stroke-width="1.300" d="M2.500 2.500h8v9h-8z"/><path stroke="none" fill="#1d7a2e" d="M0 0h5v5H0z"/></svg><span class="caret"></span></button>
    <button class="btn" aria-label="Grubość"><svg width="13" height="12"><path stroke="#333" d="M0 2.500h12"/><path stroke="#333" stroke-width="2" d="M0 6h6M8 6h4"/><path stroke="#333" stroke-width="2" d="M0 10h12"/></svg></button>
    <button class="btn" aria-label="Cykliczny wybór"><svg width="13" height="12"><path stroke="#3b8ee0" stroke-width="1.500" d="M0 3.500h6M3 1v6"/><path fill="#82b277" stroke="#5f915a" d="M4.500 4.500h7v7h-7z"/></svg></button>
    <button class="btn" aria-label="Widoczność opisów"><svg width="14" height="14"><use class="blue-fill" href="#man"/><circle cx="9" cy="4" r="2" stroke="#3b8ee0" fill="#fff"/></svg></button>
    <button class="btn" aria-label="Autoskala"><svg width="14" height="14"><use class="gray-fill" href="#man"/><path stroke="#555" d="M9 7l2-3h-1l2-3"/></svg></button>
    <button class="btn d-flex align-items-center gap-1 text-dark"><svg class="me-1" width="14" height="14"><use class="gray-fill" href="#man"/></svg>1:1<span class="caret"></span></button>
    <button class="btn d-flex align-items-center gap-2" aria-label="Obszar roboczy"><svg width="11" height="11"><circle cx="5.500" cy="5.500" r="3" stroke="#555" stroke-width="2.500"/><circle cx="5.500" cy="5.500" r="4.500" stroke="#555" stroke-dasharray="2 1.500"/></svg><span class="caret"></span></button>
    <button class="btn" aria-label="Monitor opisów"><svg width="12" height="12"><path stroke-width="1.300" d="M6 1v10M1 6h10"/></svg></button>
    <button class="btn" aria-label="Izoluj obiekty"><svg width="13" height="12"><path d="M.5 1.500h5v5h-5zM4.500 7l2.500 4.500H2z"/><circle cx="9.500" cy="5" r="2.500"/></svg></button>
    <button class="btn" aria-label="Wydajność"><svg width="12" height="12"><circle cx="6" cy="6" r="6" fill="#0d57a5" stroke="none"/><path stroke="#7db4e8" d="M5 8l3-3"/></svg></button>
    <button class="btn" aria-label="Czysty ekran"><svg width="12" height="10"><path d="M.5.5h11v9H.5zM2.500 7.500L5 5.500M7 4l2.500-2M7 2h2.500v2M2.500 5.500v2H5"/></svg></button>
    <button class="btn" aria-label="Dostosowanie"><svg width="12" height="12"><path stroke="#333" stroke-width="1.300" d="M0 2h12M0 6h12M0 10h12"/></svg></button>
  </div>
</footer>
</body>
</html>
